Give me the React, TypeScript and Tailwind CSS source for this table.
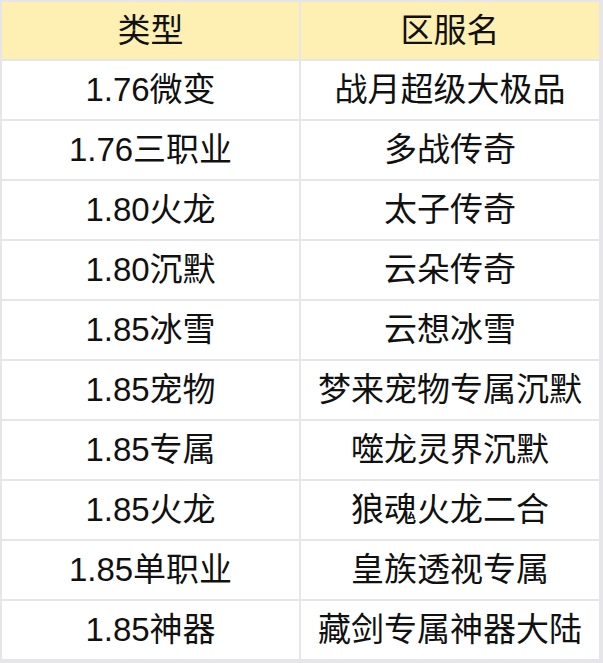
import React from "react";

const rows: [string, string][] = [
  ["1.76微变", "战月超级大极品"],
  ["1.76三职业", "多战传奇"],
  ["1.80火龙", "太子传奇"],
  ["1.80沉默", "云朵传奇"],
  ["1.85冰雪", "云想冰雪"],
  ["1.85宠物", "梦来宠物专属沉默"],
  ["1.85专属", "噬龙灵界沉默"],
  ["1.85火龙", "狼魂火龙二合"],
  ["1.85单职业", "皇族透视专属"],
  ["1.85神器", "藏剑专属神器大陆"],
];

export default function App() {
  return (
    <div
      className="w-[603px] h-[663px] bg-[#e5e5ea] pl-[2px] pt-[2px] pr-[4px] pb-[4px] text-[33px] text-[#111111]"
      style={{ fontFamily: '"Liberation Sans", "Noto Sans CJK SC", sans-serif' }}
    >
      <div className="grid grid-cols-[297px_298px] gap-[2px] auto-rows-[58px] grid-rows-[57px]">
        <div className="bg-[#feefb3] flex items-center justify-center h-[57px]">类型</div>
        <div className="bg-[#feefb3] flex items-center justify-center h-[57px]">区服名</div>
        {rows.map(([a, b], i) => (
          <React.Fragment key={i}>
            <div className="bg-white flex items-center justify-center h-[58px]">{a}</div>
            <div className="bg-white flex items-center justify-center h-[58px]">{b}</div>
          </React.Fragment>
        ))}
      </div>
    </div>
  );
}
